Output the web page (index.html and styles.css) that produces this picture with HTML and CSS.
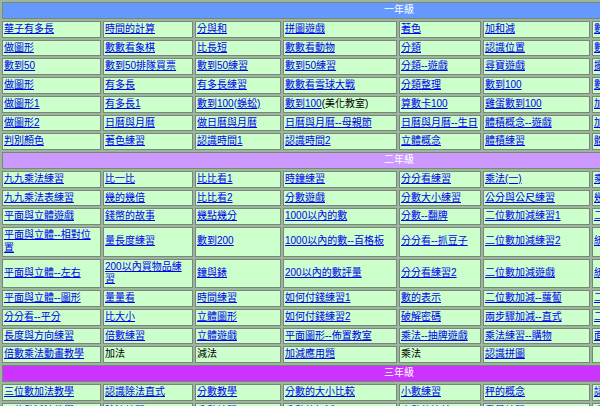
FILE: index.html
```html
<!DOCTYPE html>
<html lang="zh-Hant">
<head>
<meta charset="utf-8">
<title>數學遊戲</title>
<link rel="stylesheet" href="styles.css">
</head>
<body>
<table class="grid">
<colgroup>
<col class="c1"><col class="c2"><col class="c3"><col class="c4"><col class="c5"><col class="c6"><col class="c7"><col class="c8">
</colgroup>
<tr><td colspan="8" class="grade g1">一年級</td></tr>
<tr><td><a href="#">華子有多長</a></td><td><a href="#">時間的計算</a></td><td><a href="#">分與和</a></td><td><a href="#">拼圖遊戲</a></td><td><a href="#">著色</a></td><td><a href="#">加和減</a></td><td><a href="#">數數看</a></td><td><a href="#">數字遊戲</a></td></tr>
<tr><td><a href="#">做圖形</a></td><td><a href="#">數數看象棋</a></td><td><a href="#">比長短</a></td><td><a href="#">數數看動物</a></td><td><a href="#">分類</a></td><td><a href="#">認識位置</a></td><td><a href="#">數一數</a></td><td><a href="#">數數練習</a></td></tr>
<tr><td><a href="#">數到50</a></td><td><a href="#">數到50排隊買票</a></td><td><a href="#">數到50練習</a></td><td><a href="#">數到50練習</a></td><td><a href="#">分類--遊戲</a></td><td><a href="#">尋寶遊戲</a></td><td><a href="#">擺擺看</a></td><td><a href="#">排排看</a></td></tr>
<tr><td><a href="#">做圖形</a></td><td><a href="#">有多長</a></td><td><a href="#">有多長練習</a></td><td><a href="#">數數看雪球大戰</a></td><td><a href="#">分類整理</a></td><td><a href="#">數到100</a></td><td><a href="#">數到100練習</a></td><td><a href="#">數到100遊戲</a></td></tr>
<tr><td><a href="#">做圖形1</a></td><td><a href="#">有多長1</a></td><td><a href="#">數到100(蜈蚣)</a></td><td><a href="#">數到100</a>(美化教室)</td><td><a href="#">算數卡100</a></td><td><a href="#">雞蛋數到100</a></td><td><a href="#">加法練習</a></td><td><a href="#">減法練習</a></td></tr>
<tr><td><a href="#">做圖形2</a></td><td><a href="#">日曆與月曆</a></td><td><a href="#">做日曆與月曆</a></td><td><a href="#">日曆與月曆--母親節</a></td><td><a href="#">日曆與月曆--生日</a></td><td><a href="#">體積概念--遊戲</a></td><td><a href="#">加減練習</a></td><td><a href="#">加減遊戲</a></td></tr>
<tr><td><a href="#">判別顏色</a></td><td><a href="#">著色練習</a></td><td><a href="#">認識時間1</a></td><td><a href="#">認識時間2</a></td><td><a href="#">立體概念</a></td><td><a href="#">體積練習</a></td><td><a href="#">體積遊戲</a></td><td><a href="#">形狀遊戲</a></td></tr>
<tr><td colspan="8" class="grade g2">二年級</td></tr>
<tr><td><a href="#">九九乘法練習</a></td><td><a href="#">比一比</a></td><td><a href="#">比比看1</a></td><td><a href="#">時鐘練習</a></td><td><a href="#">分分看練習</a></td><td><a href="#">乘法(一)</a></td><td><a href="#">乘法(二)</a></td><td><a href="#">乘法(三)</a></td></tr>
<tr><td><a href="#">九九乘法表練習</a></td><td><a href="#">幾的幾倍</a></td><td><a href="#">比比看2</a></td><td><a href="#">分數遊戲</a></td><td><a href="#">分數大小練習</a></td><td><a href="#">公分與公尺練習</a></td><td><a href="#">幾倍練習</a></td><td><a href="#">長度練習</a></td></tr>
<tr><td><a href="#">平面與立體遊戲</a></td><td><a href="#">錢幣的故事</a></td><td><a href="#">幾點幾分</a></td><td><a href="#">1000以內的數</a></td><td><a href="#">分數--翻牌</a></td><td><a href="#">二位數加減練習1</a></td><td><a href="#">二位數加法</a></td><td><a href="#">二位數減法</a></td></tr>
<tr><td><a href="#">平面與立體--相對位置</a></td><td><a href="#">量長度練習</a></td><td><a href="#">數到200</a></td><td><a href="#">1000以內的數--百格板</a></td><td><a href="#">分分看--抓豆子</a></td><td><a href="#">二位數加減練習2</a></td><td><a href="#">統計圖表</a></td><td><a href="#">統計練習</a></td></tr>
<tr><td><a href="#">平面與立體--左右</a></td><td><a href="#">200以內買物品練習</a></td><td><a href="#">鐘與錶</a></td><td><a href="#">200以內的數評量</a></td><td><a href="#">分分看練習2</a></td><td><a href="#">二位數加減遊戲</a></td><td><a href="#">統計遊戲</a></td><td><a href="#">圖表遊戲</a></td></tr>
<tr><td><a href="#">平面與立體--圖形</a></td><td><a href="#">量量看</a></td><td><a href="#">時間練習</a></td><td><a href="#">如何付錢練習1</a></td><td><a href="#">數的表示</a></td><td><a href="#">二位數加減--蘿蔔</a></td><td><a href="#">二位數遊戲</a></td><td><a href="#">數的遊戲</a></td></tr>
<tr><td><a href="#">分分看--平分</a></td><td><a href="#">比大小</a></td><td><a href="#">立體圖形</a></td><td><a href="#">如何付錢練習2</a></td><td><a href="#">破解密碼</a></td><td><a href="#">兩步驟加減--直式</a></td><td><a href="#">二步驟練習</a></td><td><a href="#">直式練習</a></td></tr>
<tr><td><a href="#">長度與方向練習</a></td><td><a href="#">倍數練習</a></td><td><a href="#">立體遊戲</a></td><td><a href="#">平面圖形--佈置教室</a></td><td><a href="#">乘法--抽牌遊戲</a></td><td><a href="#">乘法練習--購物</a></td><td><a href="#">面積練習</a></td><td><a href="#">周長練習</a></td></tr>
<tr><td><a href="#">倍數乘法動畫教學</a></td><td>加法</td><td>減法</td><td><a href="#">加減應用題</a></td><td>乘法</td><td><a href="#">認識拼圖</a></td><td></td><td></td></tr>
<tr><td colspan="8" class="grade g3">三年級</td></tr>
<tr><td><a href="#">三位數加法教學</a></td><td><a href="#">認識除法直式</a></td><td><a href="#">分數教學</a></td><td><a href="#">分數的大小比較</a></td><td><a href="#">小數練習</a></td><td><a href="#">秤的概念</a></td><td><a href="#">認識公升</a></td><td><a href="#">認識公斤</a></td></tr>
<tr><td><a href="#">三位數減法教學</a></td><td><a href="#">除法練習</a></td><td><a href="#">分數練習</a></td><td><a href="#">分數的加減</a></td><td><a href="#">小數的比較</a></td><td><a href="#">重量練習</a></td><td><a href="#">容量練習</a></td><td><a href="#">時間練習</a></td></tr>
</table>
</body>
</html>
```

FILE: styles.css
```css
html, body {
  margin: 0;
  padding: 0;
  background: #ffffff;
}

.grid {
  table-layout: fixed;
  width: 798px;
  border-collapse: separate;
  border-spacing: 2px;
  border: 0;
  background: #9fb49f;
  font-family: "Liberation Sans", "Noto Sans CJK TC", sans-serif;
  font-size: 10px;
  line-height: 12.75px;
}

.c1 { width: 99px; }
.c2 { width: 90px; }
.c3 { width: 86px; }
.c4 { width: 114px; }
.c5 { width: 82px; }
.c6 { width: 107px; }
.c7 { width: 101px; }
.c8 { width: 101px; }

.grid td {
  background: #ccffcc;
  border: 1px solid #748a74;
  padding: 1px;
  vertical-align: middle;
  text-align: left;
  color: #000000;
  overflow: hidden;
}

.grid a {
  color: #0000ee;
  text-decoration: underline;
}

.grid td.grade {
  text-align: center;
  color: #ffffff;
}

.grid td.g1 { background: #6699ff; }
.grid td.g2 { background: #cc99ff; }
.grid td.g3 { background: #cc33ff; }
```
